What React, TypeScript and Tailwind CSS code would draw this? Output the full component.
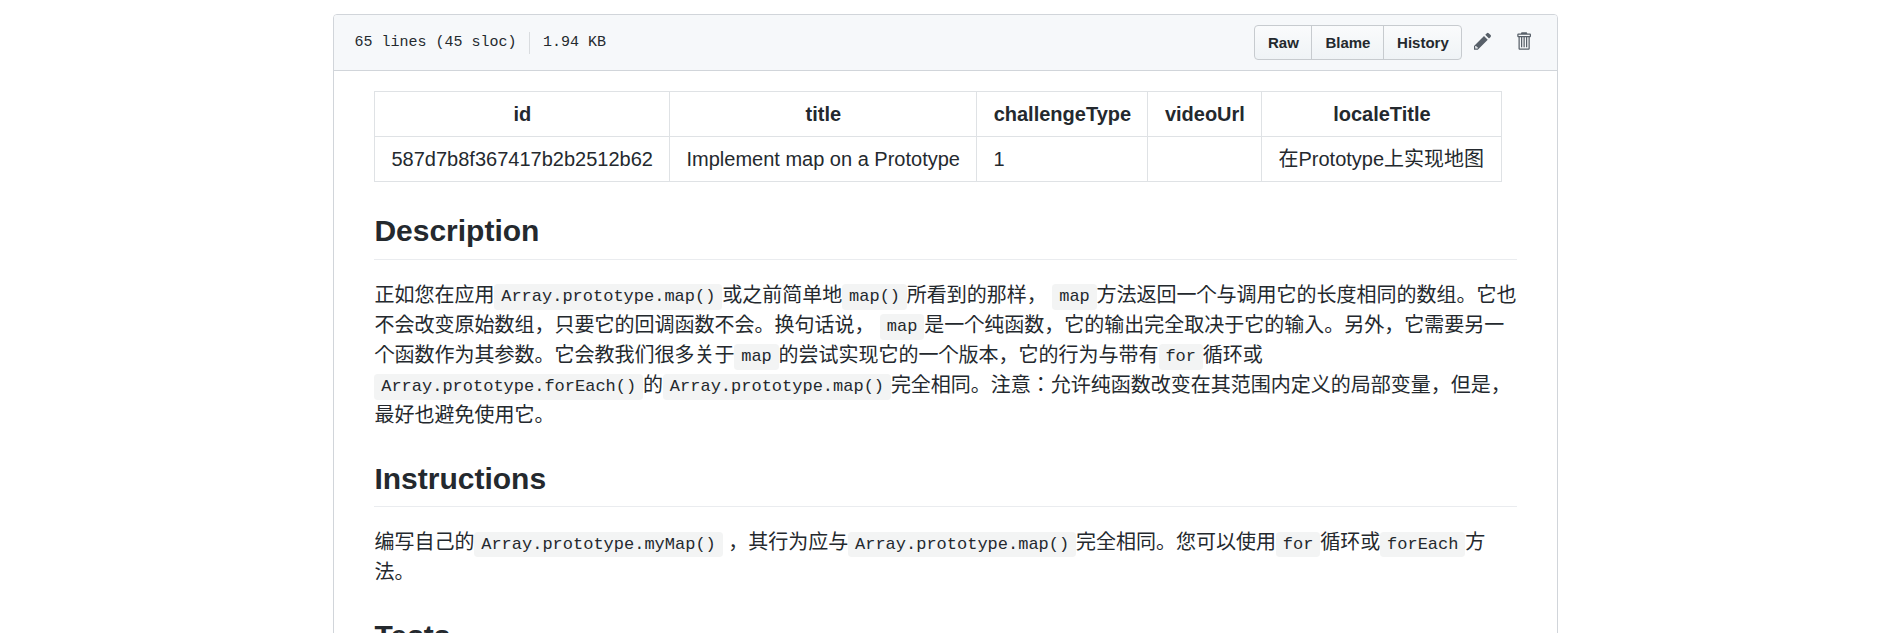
import type { ReactNode } from 'react';

const columns = ['id', 'title', 'challengeType', 'videoUrl', 'localeTitle'];
const row = ['587d7b8f367417b2b2512b62', 'Implement map on a Prototype', '1', '', '在Prototype上实现地图'];
const columnWidths = ['w-[295px]', 'w-[307px]', 'w-[171px]', 'w-[114px]', 'w-[240px]'];

function Code({ children }: { children: ReactNode }) {
  return (
    <code className="rounded-[3.75px] bg-[#1b1f23]/5 px-[6.8px] py-[3.4px] font-['Liberation_Mono',monospace] text-[17px] leading-[22px]">
      {children}
    </code>
  );
}

function Heading({ children }: { children: ReactNode }) {
  return (
    <h2 className="mt-[30px] mb-5 border-b border-[#eaecef] pb-[9px] text-[30px] leading-[37.5px] font-bold">
      {children}
    </h2>
  );
}

function Toolbar() {
  return (
    <header className="flex h-14 items-center justify-between border-b border-[#d1d5da] bg-[#f6f8fa] pr-[26px] pl-5">
      <div className="flex items-center font-['Liberation_Mono',monospace] text-[15px] leading-[22px]">
        <span>65 lines (45 sloc)</span>
        <span className="mr-[13px] ml-[12.5px] h-[22px] w-px bg-[#d9dcdf]" />
        <span>1.94 KB</span>
      </div>
      <div className="flex items-center text-[#586069]">
        <div className="flex h-[35px] overflow-hidden rounded-[4px] border border-[#c7cbcf] bg-linear-to-b from-[#fafbfc] to-[#eff3f6] text-[15px] font-bold text-[#24292e]">
          <button className="w-[57px] border-r border-[#c7cbcf]">Raw</button>
          <button className="w-[72px] border-r border-[#c7cbcf]">Blame</button>
          <button className="w-[77px]">History</button>
        </div>
        <svg className="mb-[3px] ml-3 h-5 w-[17.5px]" viewBox="0 0 14 16" fill="currentColor">
          <path d="M0 12v3h3l8-8-3-3-8 8zm3 2H1v-2h1v1h1v1zm10.3-9.3L12 6 9 3l1.3-1.3a.996.996 0 0 1 1.41 0l1.59 1.59c.39.39.39 1.02 0 1.41z" />
        </svg>
        <svg className="mb-[3px] ml-[24.5px] h-5 w-[15px]" viewBox="0 0 12 16" fill="currentColor">
          <path fillRule="evenodd" d="M11 2H9c0-.55-.45-1-1-1H5c-.55 0-1 .45-1 1H2c-.55 0-1 .45-1 1v1c0 .55.45 1 1 1v9c0 .55.45 1 1 1h7c.55 0 1-.45 1-1V5c.55 0 1-.45 1-1V3c0-.55-.45-1-1-1zm-1 12H3V5h1v8h1V5h1v8h1V5h1v8h1V5h1v9zm1-10H2V3h9v1z" />
        </svg>
      </div>
    </header>
  );
}

export default function App() {
  return (
    <div className="h-[633px] overflow-hidden bg-white pt-[14px] pl-[333.4px] font-['Liberation_Sans','Noto_Sans_CJK_JP',sans-serif] text-xl leading-[30px] text-[#24292e]">
      <div className="w-[1225px] overflow-hidden rounded-[4px] border border-[#d1d5da]">
        <Toolbar />
        <article className="h-[900px] px-10 pt-5">
          <table className="w-[1128px] table-fixed border-collapse whitespace-nowrap">
            <colgroup>
              {columnWidths.map((w) => (
                <col key={w} className={w} />
              ))}
            </colgroup>
            <thead>
              <tr className="h-[45px]">
                {columns.map((c) => (
                  <th key={c} className="border border-[#dfe2e5] p-0 font-bold">{c}</th>
                ))}
              </tr>
            </thead>
            <tbody>
              <tr className="h-[45px]">
                {row.map((c, i) => (
                  <td key={i} className="border border-[#dfe2e5] py-0 pr-0 pl-[16.1px]">{c}</td>
                ))}
              </tr>
            </tbody>
          </table>
          <Heading>Description</Heading>
          <p>
            正如您在应用<Code>Array.prototype.map()</Code>或之前简单地<Code>map()</Code>所看到的那样， <Code>map</Code>
            方法返回一个与调用它的长度相同的数组。它也不会改变原始数组，只要它的回调函数不会。换句话说， <Code>map</Code>
            是一个纯函数，它的输出完全取决于它的输入。另外，它需要另一个函数作为其参数。它会教我们很多关于<Code>map</Code>
            的尝试实现它的一个版本，它的行为与带有<Code>for</Code>循环或<Code>Array.prototype.forEach()</Code>的
            <Code>Array.prototype.map()</Code>完全相同。注意：允许纯函数改变在其范围内定义的局部变量，但是，最好也避免使用它。
          </p>
          <Heading>Instructions</Heading>
          <p>
            编写自己的<Code>Array.prototype.myMap()</Code> ，其行为应与<Code>Array.prototype.map()</Code>
            完全相同。您可以使用<Code>for</Code>循环或<Code>forEach</Code>方法。
          </p>
          <Heading>Tests</Heading>
        </article>
      </div>
    </div>
  );
}
